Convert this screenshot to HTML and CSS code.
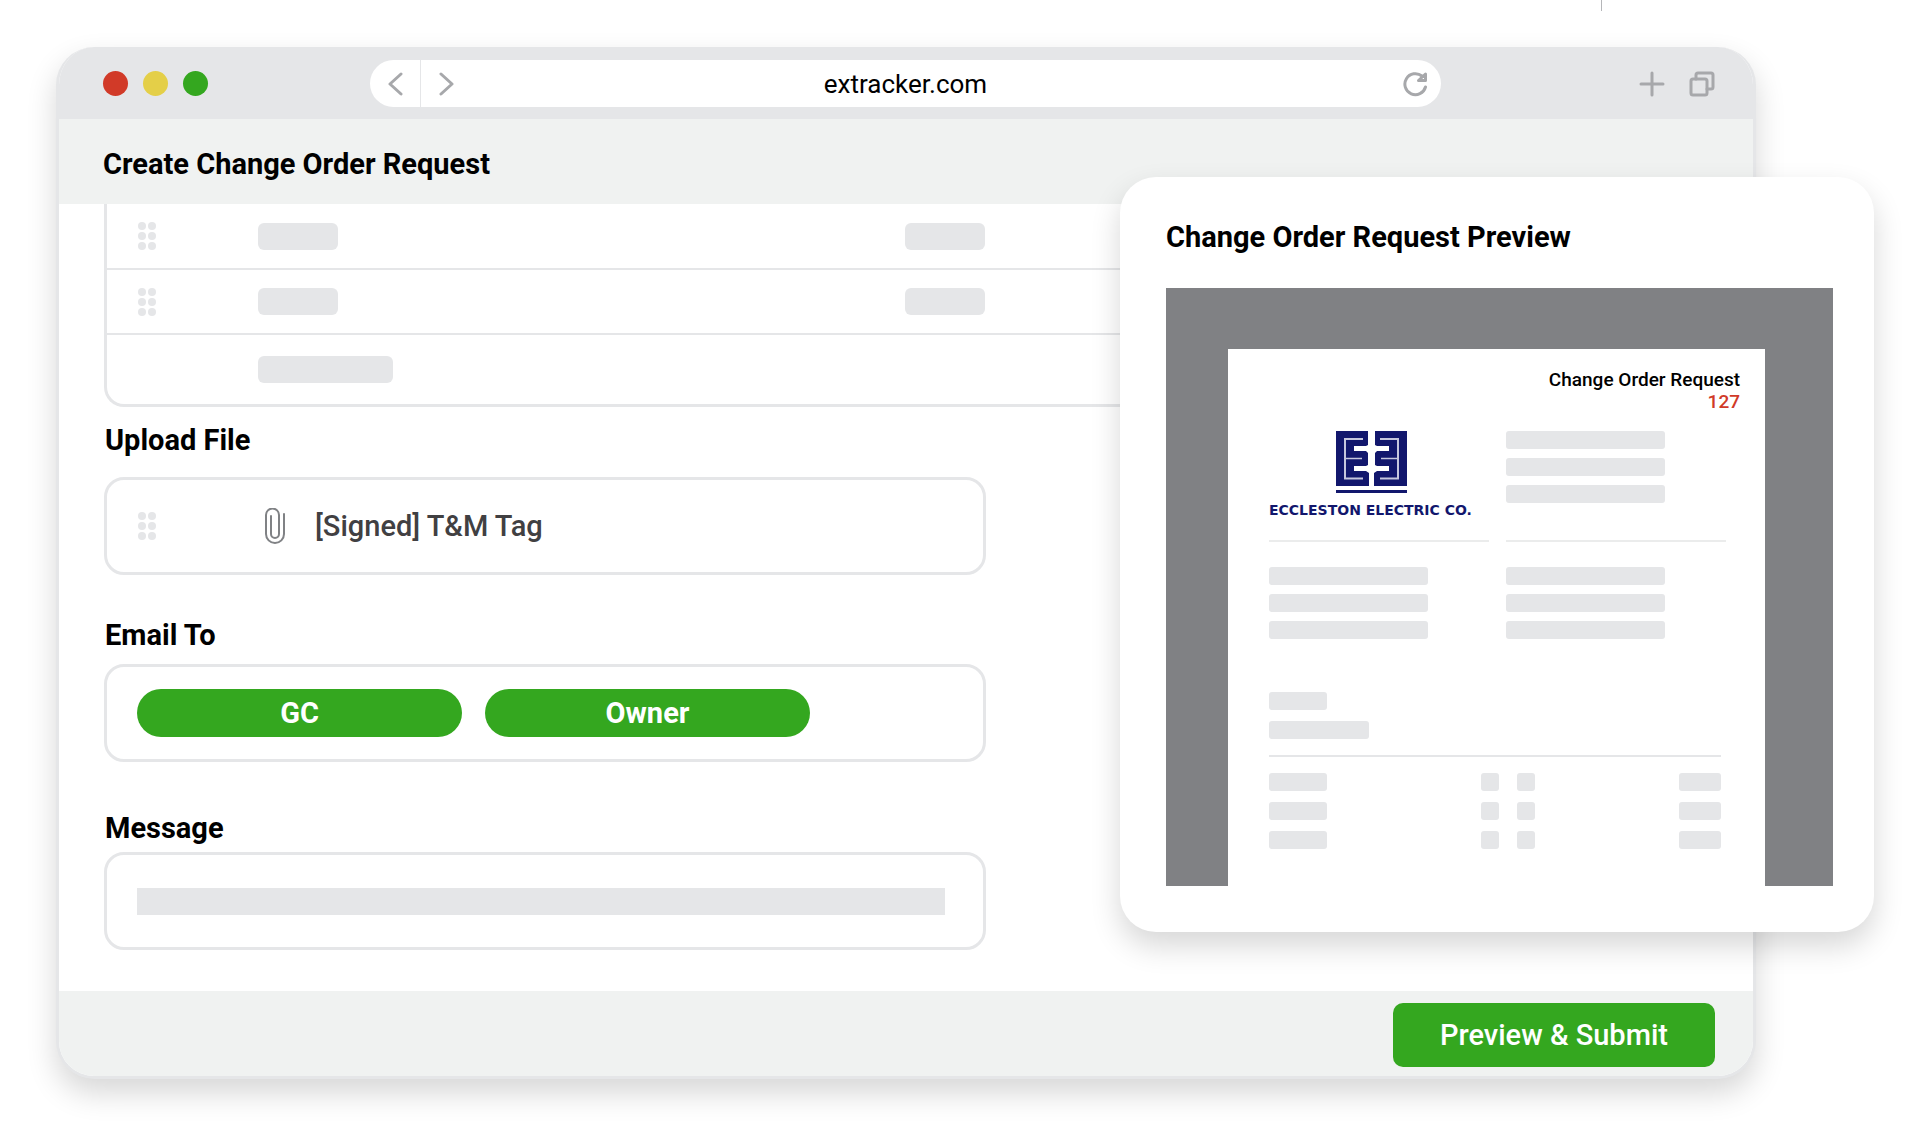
FILE: index.html
```html
<!DOCTYPE html>
<html lang="en">

<head>
    <meta charset="UTF-8">
    <meta name="viewport" content="width=device-width, initial-scale=1.0">
    <title>Create Change Order Request</title>
    <link rel="stylesheet" href="styles.css">
</head>

<body>
    <div class="stage">
        <span class="guide-line"></span>

        <div class="browser">
            <div class="browser-bar">
                <div class="lights">
                    <span class="light red"></span>
                    <span class="light yellow"></span>
                    <span class="light green"></span>
                </div>

                <div class="address">
                    <button type="button" class="icon-btn back" aria-label="Back">
                        <svg width="16" height="24" viewBox="0 0 16 24"><path d="M14 2L3 12l11 10" /></svg>
                    </button>
                    <button type="button" class="icon-btn forward" aria-label="Forward">
                        <svg width="16" height="24" viewBox="0 0 16 24"><path d="M2 2l11 10L2 22" /></svg>
                    </button>
                    <input type="text" class="url" aria-label="Address" value="extracker.com">
                    <button type="button" class="icon-btn reload" aria-label="Reload">
                        <svg width="26" height="26" viewBox="0 0 26 26">
                            <path d="M23.500 16A10.500 10.500 0 1 1 20 5" />
                            <path d="M23.500 3v6.500h-7z" />
                        </svg>
                    </button>
                </div>

                <div class="browser-actions">
                    <button type="button" class="icon-btn" aria-label="New tab">
                        <svg width="26" height="26" viewBox="0 0 26 26"><path d="M13 2v22M2 13h22" /></svg>
                    </button>
                    <button type="button" class="icon-btn" aria-label="Show tabs">
                        <svg width="26" height="26" viewBox="0 0 26 26">
                            <rect x="2" y="8" width="16" height="16" rx="2" />
                            <path d="M7 8V4a2 2 0 0 1 2-2h13a2 2 0 0 1 2 2v12a2 2 0 0 1-2 2h-4" />
                        </svg>
                    </button>
                </div>
            </div>

            <header class="page-header">
                <h1>Create Change Order Request</h1>
            </header>

            <form class="content">
                <div class="items">
                    <table>
                        <tr>
                            <td class="grip-cell"><svg class="grip" viewBox="0 0 20 30"><use href="#dots" /></svg></td>
                            <td class="name-cell"><span class="bar"></span></td>
                            <td><span class="bar"></span></td>
                        </tr>
                        <tr>
                            <td class="grip-cell"><svg class="grip" viewBox="0 0 20 30"><use href="#dots" /></svg></td>
                            <td class="name-cell"><span class="bar"></span></td>
                            <td><span class="bar"></span></td>
                        </tr>
                        <tr class="total">
                            <td class="grip-cell"></td>
                            <td class="name-cell"><span class="bar bar-wide"></span></td>
                            <td></td>
                        </tr>
                    </table>
                </div>

                <section class="field upload">
                    <h2>Upload File</h2>
                    <div class="box">
                        <svg class="grip" viewBox="0 0 20 30"><use href="#dots" /></svg>
                        <svg class="clip" width="20" height="36" viewBox="0 0 20 36">
                            <path d="M19 6v20a9 9 0 0 1-18 0V7a6.500 6.500 0 0 1 13 0v19a4 4 0 0 1-8 0V8" />
                        </svg>
                        <span class="file-name">[Signed] T&amp;M Tag</span>
                    </div>
                </section>

                <section class="field email">
                    <h2>Email To</h2>
                    <div class="box">
                        <button type="button" class="chip">GC</button>
                        <button type="button" class="chip">Owner</button>
                    </div>
                </section>

                <section class="field message">
                    <h2>Message</h2>
                    <div class="box">
                        <span class="message-bar"></span>
                    </div>
                </section>
            </form>

            <footer class="page-footer">
                <button type="submit" class="submit">Preview &amp; Submit</button>
            </footer>
        </div>

        <aside class="preview">
            <h2>Change Order Request Preview</h2>
            <div class="viewer">
                <div class="paper">
                    <div class="paper-title">
                        <p>Change Order Request</p>
                        <p class="number">127</p>
                    </div>

                    <div class="columns top">
                        <div class="logo">
                            <svg width="72" height="64" viewBox="0 0 72 64">
                                <g id="half">
                                    <path fill="#12176d" d="M0 0h32v14l-2 1H18v5h12l2 2v12l-2 1H18v5h12l3 2v13H0z" />
                                    <path fill="none" stroke="#c6c7de" stroke-width="2" d="M27 8H9v39.500h18" />
                                    <path stroke="#c6c7de" stroke-width="1.500" d="M9 27.500h17" />
                                </g>
                                <use href="#half" transform="translate(71 0) scale(-1 1)" />
                                <path fill="#fff" d="M18 15h35v5H18zM18 35h35v5H18z" />
                                <path fill="#12176d" d="M0 59h71v3H0z" />
                            </svg>
                            <span>ECCLESTON ELECTRIC CO.</span>
                        </div>
                        <div class="lines"><span></span><span></span><span></span></div>
                    </div>

                    <div class="columns bottom">
                        <div class="lines"><span></span><span></span><span></span></div>
                        <div class="lines"><span></span><span></span><span></span></div>
                    </div>

                    <div class="summary">
                        <span class="cell cell-m"></span>
                        <span class="cell cell-l"></span>
                    </div>

                    <table class="costs">
                        <tr>
                            <td><span class="cell cell-m"></span></td>
                            <td class="qty"><span class="cell cell-xs"></span></td>
                            <td class="rate"><span class="cell cell-xs"></span></td>
                            <td class="amount"><span class="cell cell-s"></span></td>
                        </tr>
                        <tr>
                            <td><span class="cell cell-m"></span></td>
                            <td class="qty"><span class="cell cell-xs"></span></td>
                            <td class="rate"><span class="cell cell-xs"></span></td>
                            <td class="amount"><span class="cell cell-s"></span></td>
                        </tr>
                        <tr>
                            <td><span class="cell cell-m"></span></td>
                            <td class="qty"><span class="cell cell-xs"></span></td>
                            <td class="rate"><span class="cell cell-xs"></span></td>
                            <td class="amount"><span class="cell cell-s"></span></td>
                        </tr>
                    </table>
                </div>
            </div>
        </aside>
    </div>

    <!-- drag handle, shared by all rows -->
    <svg class="sprite" width="0" height="0">
        <symbol id="dots" viewBox="0 0 20 30">
            <circle cx="5" cy="5" r="4" />
            <circle cx="15" cy="5" r="4" />
            <circle cx="5" cy="15" r="4" />
            <circle cx="15" cy="15" r="4" />
            <circle cx="5" cy="25" r="4" />
            <circle cx="15" cy="25" r="4" />
        </symbol>
    </svg>
</body>

</html>
```

FILE: styles.css
```css
* {
    box-sizing: border-box;
}

body {
    margin: 0;
    background: #fff;
    font-family: Roboto, "Liberation Sans", sans-serif;
    color: #000;
}

h1,
h2,
p {
    margin: 0;
}

h1,
h2 {
    font-size: 29px;
    line-height: 34px;
    font-weight: 700;
}

button {
    border: none;
    padding: 0;
    font-family: inherit;
    cursor: pointer;
}

table {
    width: 100%;
    border-collapse: collapse;
    table-layout: fixed;
}

td {
    padding: 0;
}

.stage {
    position: relative;
    padding: 47px 164px 48px 56px;
}

.guide-line {
    position: absolute;
    top: 0;
    right: 318px;
    width: 1px;
    height: 11px;
    background: #b5b6b9;
}

.sprite {
    position: absolute;
}

/* browser window */
.browser {
    border: 3px solid #e5e6e8;
    border-top: none;
    border-radius: 38px;
    background: #fff;
    box-shadow: 0 14px 30px rgba(0, 0, 0, 0.16);
    overflow: hidden;
}

.browser-bar {
    display: grid;
    grid-template-columns: 267fr 1070fr 274fr;
    align-items: center;
    height: 72px;
    padding: 1px 38px 0 44px;
    background: #e5e6e8;
}

.lights {
    display: flex;
    gap: 15px;
}

.light {
    width: 25px;
    height: 25px;
    border-radius: 50%;
}

.red {
    background: #d13a28;
}

.yellow {
    background: #e4cf48;
}

.green {
    background: #34a71f;
}

.address {
    display: flex;
    height: 47px;
    border-radius: 24px;
    background: #fff;
    overflow: hidden;
}

.icon-btn {
    display: flex;
    align-items: center;
    justify-content: center;
    background: none;
}

.icon-btn svg {
    fill: none;
    stroke: #a7a8ab;
    stroke-width: 3;
    stroke-linecap: round;
    stroke-linejoin: round;
}

.back,
.forward,
.reload {
    flex: none;
    width: 51px;
}

.back {
    border-right: 1px solid #e5e6e8;
}

.reload {
    width: 102px;
    padding-left: 50px;
}

.url {
    flex: 1;
    min-width: 0;
    border: none;
    background: none;
    font-family: inherit;
    font-size: 26px;
    text-align: center;
}

.browser-actions {
    display: flex;
    justify-content: flex-end;
    gap: 24px;
}

.page-header {
    padding: 28px 44px 23px;
    background: #f0f2f1;
}

/* form */
.content {
    padding: 0 45px 41px;
}

.items {
    border: 3px solid #e5e6e8;
    border-top: none;
    border-radius: 0 0 20px 20px;
}

.items tr {
    height: 65px;
    border-bottom: 2px solid #e5e6e8;
}

.items .total {
    height: 70px;
    border-bottom: none;
}

.grip-cell {
    width: 151px;
    padding-left: 30px;
}

.name-cell {
    width: 647px;
}

.grip {
    display: block;
    flex: none;
    width: 20px;
    height: 30px;
    fill: #e5e6e8;
}

.bar {
    display: block;
    width: 80px;
    height: 27px;
    border-radius: 6px;
    background: #e5e6e8;
}

.bar-wide {
    width: 135px;
}

.field {
    max-width: 882px;
}

.field h2 {
    padding-left: 1px;
}

.upload {
    margin-top: 16px;
}

.upload h2 {
    margin-bottom: 20px;
}

.email {
    margin-top: 43px;
}

.email h2 {
    margin-bottom: 12px;
}

.message {
    margin-top: 49px;
}

.message h2 {
    margin-bottom: 7px;
}

.box {
    display: flex;
    align-items: center;
    height: 98px;
    padding: 0 38px 0 30px;
    border: 3px solid #e5e6e8;
    border-radius: 20px;
}

.clip {
    margin: 0 30px 0 108px;
    fill: none;
    stroke: #808285;
    stroke-width: 2;
    stroke-linecap: round;
}

.file-name {
    font-size: 29px;
    font-weight: 500;
    color: #414042;
}

.chip {
    width: 325px;
    height: 48px;
    margin-right: 23px;
    border-radius: 24px;
    background: #34a71f;
    color: #fff;
    font-size: 29px;
    font-weight: 700;
}

.message-bar {
    flex: 1;
    height: 27px;
    background: #e5e6e8;
}

.page-footer {
    display: flex;
    justify-content: flex-end;
    padding: 12px 38px 9px;
    background: #f0f2f1;
}

.submit {
    width: 322px;
    height: 64px;
    border-radius: 10px;
    background: #34a71f;
    color: #fff;
    font-size: 29px;
    font-weight: 500;
}

/* floating preview card */
.preview {
    position: absolute;
    top: 177px;
    right: 46px;
    width: 754px;
    padding: 43px 41px 46px 46px;
    border-radius: 36px;
    background: #fff;
    box-shadow: 0 14px 30px rgba(0, 0, 0, 0.16);
}

.viewer {
    margin-top: 34px;
    padding: 61px 68px 0 62px;
    background: #808184;
}

.paper {
    padding: 20px 25px 26px 41px;
    background: #fff;
}

.paper-title {
    font-size: 19px;
    line-height: 22px;
    font-weight: 500;
    text-align: right;
}

.number {
    color: #d13a28;
}

.columns {
    display: grid;
    grid-template-columns: 220px 220px;
    gap: 17px;
}

.columns > div {
    display: flex;
    flex-direction: column;
}

.columns.top > div {
    height: 111px;
    border-bottom: 2px solid #ebecec;
}

.top {
    margin-top: 18px;
}

.bottom {
    margin-top: 25px;
}

.lines {
    gap: 9px;
}

.lines span {
    width: 159px;
    height: 18px;
    border-radius: 3px;
    background: #e5e6e8;
}

.logo svg {
    display: block;
    margin-left: 67px;
}

.logo span {
    margin-top: 5px;
    font-family: "DejaVu Sans", sans-serif;
    font-size: 14px;
    line-height: 20px;
    font-weight: 700;
    color: #12176d;
    white-space: nowrap;
}

.summary {
    display: flex;
    flex-direction: column;
    gap: 11px;
    margin: 53px 19px 16px 0;
    padding-bottom: 16px;
    border-bottom: 2px solid #e5e6e8;
}

.cell {
    display: block;
    height: 18px;
    border-radius: 3px;
    background: #e5e6e8;
}

.cell-xs {
    width: 18px;
}

.cell-s {
    width: 42px;
}

.cell-m {
    width: 58px;
}

.cell-l {
    width: 100px;
}

.costs {
    width: 452px;
}

.costs td {
    height: 29px;
    vertical-align: top;
}

.qty {
    width: 36px;
}

.rate {
    width: 162px;
}

.amount {
    width: 42px;
}
```
